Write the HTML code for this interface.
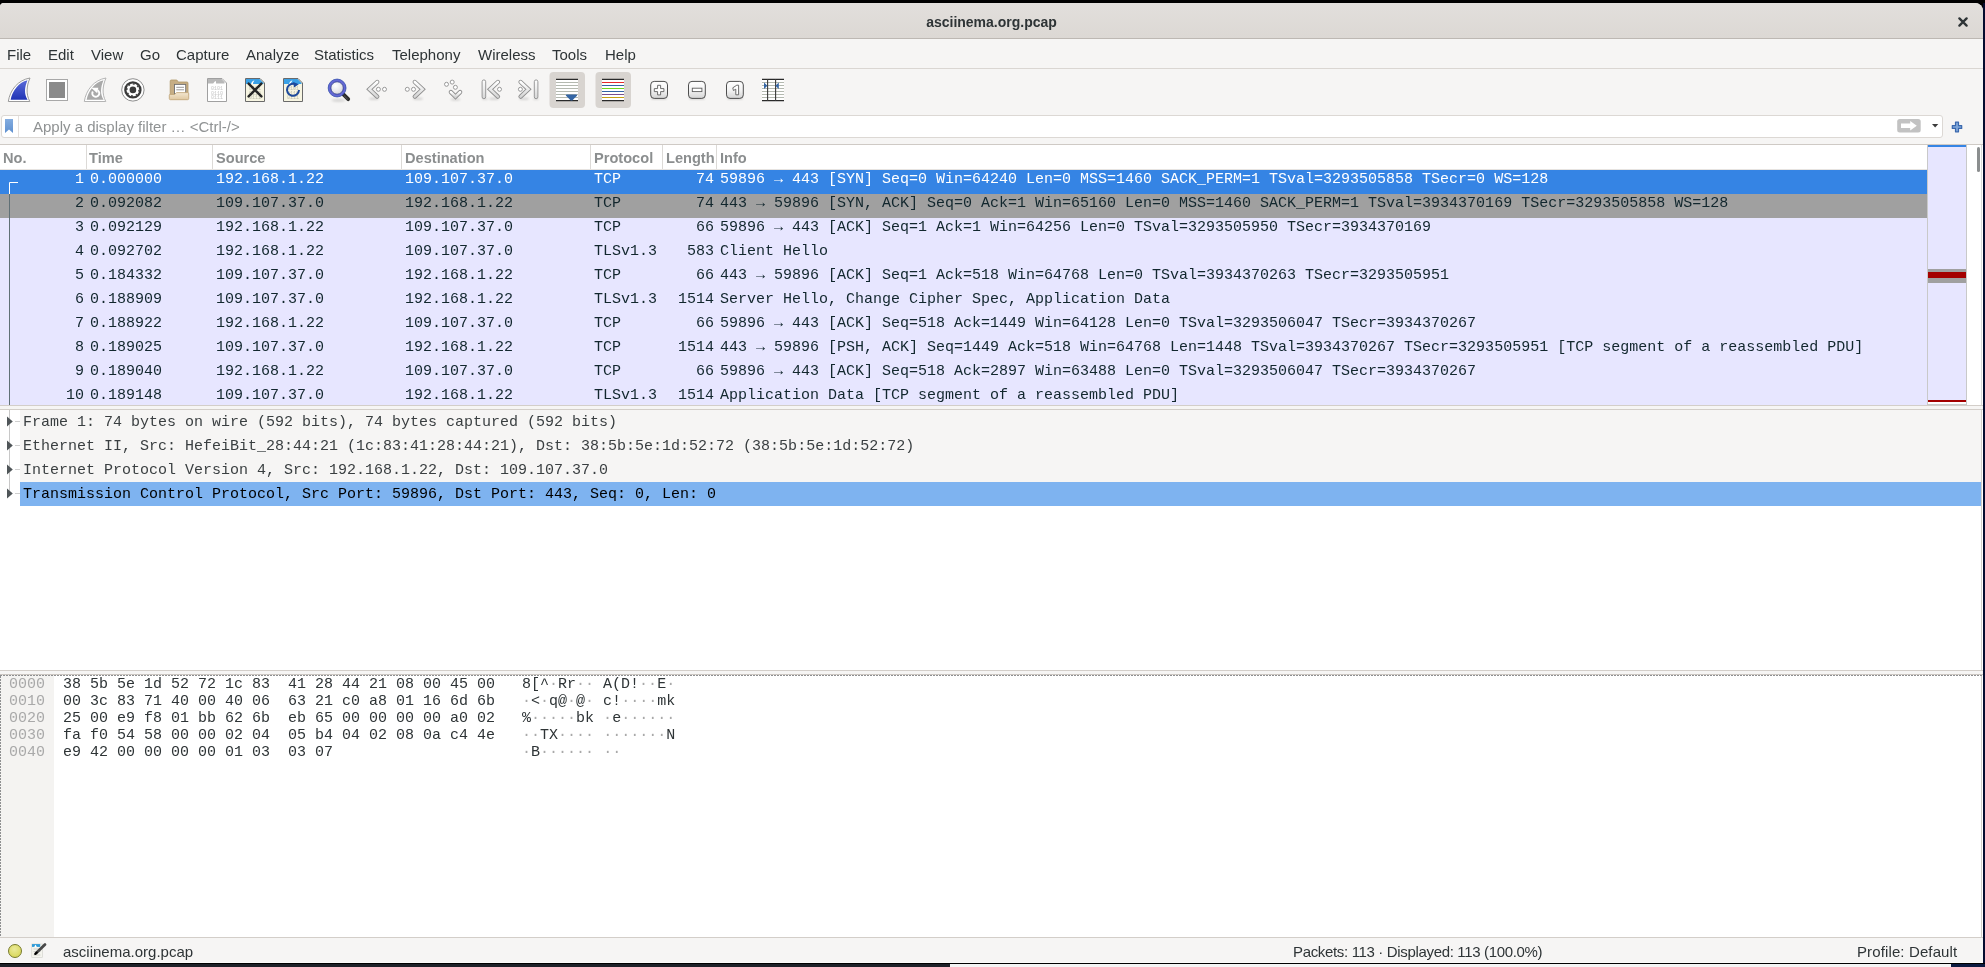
<!DOCTYPE html>
<html><head><meta charset="utf-8">
<style>
*{margin:0;padding:0;box-sizing:border-box}
body{will-change:transform;}
html,body{width:1985px;height:967px;overflow:hidden;background:#000;font-family:"Liberation Sans",sans-serif;color:#2e3436}
.a{position:absolute}
#win{position:absolute;left:0;top:3px;width:1983px;height:960px;background:#f6f5f4;border-radius:4px 8px 0 0;overflow:hidden}
#title{position:absolute;left:0;top:0;width:1983px;height:36px;background:linear-gradient(#e2dfdc,#dcd8d4);border-bottom:1px solid #bdb8b3;box-shadow:0 1px 0 #d4d0cc}
#title .t{position:absolute;left:0;width:1983px;top:11px;text-align:center;font-weight:bold;font-size:14px;color:#2e3436}
.menu{position:absolute;top:46px;font-size:15px;color:#2e3436}
.mono{font-family:"Liberation Mono",monospace;font-size:15px}
.row{position:absolute;left:0;width:1927px;height:24px;white-space:pre}
.row span{position:absolute;top:1px}
.hdr span{position:absolute;top:5px;font-family:"Liberation Sans",sans-serif;font-size:14.6px;font-weight:bold;color:#8b8e8f}
.hx i{font-style:normal;color:#a9a9a9}
.col{position:absolute;top:0;width:1px;height:24px;background:#dcdad7}
</style></head><body>
<div id="win">
 <div id="title"><div class="t">asciinema.org.pcap</div>
  <svg class="a" style="left:1955px;top:8px" width="16" height="16" viewBox="0 0 16 16"><path d="M4.4 7.4L11.6 14.6M11.6 7.4L4.4 14.6" stroke="#2e3436" stroke-width="2.3" stroke-linecap="round"/></svg>
 </div>
</div>
<!-- menubar -->
<div class="a" style="left:1983px;top:3px;width:2px;height:960px;background:#050b2e"></div>
<div class="a" style="left:0;top:39px;width:1983px;height:30px;background:#f6f5f4;border-bottom:1px solid #dad6d2"></div>
<div class="menu" style="left:7px">File</div>
<div class="menu" style="left:48px">Edit</div>
<div class="menu" style="left:91px">View</div>
<div class="menu" style="left:140px">Go</div>
<div class="menu" style="left:176px">Capture</div>
<div class="menu" style="left:246px">Analyze</div>
<div class="menu" style="left:314px">Statistics</div>
<div class="menu" style="left:392px">Telephony</div>
<div class="menu" style="left:478px">Wireless</div>
<div class="menu" style="left:552px">Tools</div>
<div class="menu" style="left:605px">Help</div>

<!-- TOOLBAR -->
<svg class="a" style="left:0;top:69px" width="800" height="45" viewBox="0 69 800 45">
 <defs>
  <linearGradient id="gb" x1="0" y1="0" x2="0" y2="1"><stop offset="0" stop-color="#5a6ad8"/><stop offset="1" stop-color="#1f33b5"/></linearGradient>
  <linearGradient id="gbtn" x1="0" y1="0" x2="0" y2="1"><stop offset="0" stop-color="#ffffff"/><stop offset="0.5" stop-color="#f4f4f4"/><stop offset="1" stop-color="#d4d4d4"/></linearGradient>
  <linearGradient id="gchev" x1="0" y1="0" x2="0" y2="1"><stop offset="0" stop-color="#ffffff"/><stop offset="1" stop-color="#d6d6d6"/></linearGradient>
  <radialGradient id="glass" cx="0.4" cy="0.35" r="0.7"><stop offset="0" stop-color="#ffffff"/><stop offset="0.6" stop-color="#e4e4e8"/><stop offset="1" stop-color="#c4c4cc"/></radialGradient>
  <linearGradient id="ring" x1="0" y1="0" x2="0" y2="1"><stop offset="0" stop-color="#6c80d8"/><stop offset="1" stop-color="#2d3f9e"/></linearGradient>
  <linearGradient id="gfold" x1="0" y1="0" x2="0" y2="1"><stop offset="0" stop-color="#f2e6d0"/><stop offset="1" stop-color="#e0c8a0"/></linearGradient>
  <filter id="bl" x="-50%" y="-50%" width="200%" height="200%"><feGaussianBlur stdDeviation="0.9"/></filter>
 </defs>
 <!-- shark fin start -->
 <path d="M8.3 101.5 C10 90 18 80 30 78 C26.5 86 25.8 94 29.8 101.5 Z" fill="#fff" stroke="#9a9a9a" stroke-width="1"/>
 <path d="M10.6 99.8 C12.5 90.5 19 82 27.5 80.3 C24.5 87.5 24 94 27.6 99.8 Z" fill="url(#gb)"/>
 <!-- stop -->
 <rect x="46.5" y="79.5" width="21" height="21" fill="#fff" stroke="#a8a8a8"/>
 <rect x="49" y="82" width="16" height="16" fill="#8a8a8a"/>
 <!-- restart fin -->
 <path d="M84.3 101.5 C86 90 94 80 106 78 C102.5 86 101.8 94 105.8 101.5 Z" fill="#fff" stroke="#b4b4b4" stroke-width="1"/>
 <path d="M86.6 99.8 C88.5 90.5 95 82 103.5 80.3 C100.5 87.5 100 94 103.6 99.8 Z" fill="#a9a9a9"/>
 <path d="M92.8 91.5 A3.5 3.5 0 1 0 97.6 90.3" fill="none" stroke="#fff" stroke-width="1.9"/>
 <path d="M91.2 87.8 L98.3 87.8 L97.2 93.2 Z" fill="#fff"/>
 <!-- gear -->
 <circle cx="132.9" cy="89.9" r="11.2" fill="#fff" stroke="#8f8f8f" stroke-width="1"/>
 <circle cx="132.9" cy="89.9" r="8.7" fill="#3a3a3a"/>
 <circle cx="132.9" cy="89.9" r="6.4" fill="#fff"/>
 <g fill="#3a3a3a">
  <rect x="131.95" y="83.2" width="1.9" height="1.3" transform="rotate(98 132.9 89.9)"/>
  <rect x="131.95" y="83.2" width="1.9" height="1.3" transform="rotate(143 132.9 89.9)"/>
  <rect x="131.95" y="83.2" width="1.9" height="1.3" transform="rotate(188 132.9 89.9)"/>
  <rect x="131.95" y="83.2" width="1.9" height="1.3" transform="rotate(233 132.9 89.9)"/>
  <rect x="131.95" y="83.2" width="1.9" height="1.3" transform="rotate(278 132.9 89.9)"/>
  <rect x="131.95" y="83.2" width="1.9" height="1.3" transform="rotate(323 132.9 89.9)"/>
  <rect x="131.95" y="83.2" width="1.9" height="1.3" transform="rotate(8 132.9 89.9)"/>
  <rect x="131.95" y="83.2" width="1.9" height="1.3" transform="rotate(53 132.9 89.9)"/>
 </g>
 <circle cx="132.9" cy="89.9" r="3.3" fill="#3a3a3a"/>
 <!-- open folder -->
 <path d="M170.2 81 Q170.2 80 171.3 80 L176.8 80 L178.3 82 L187 82 Q188 82 188 83.2 L188 95 L170.2 95 Z" fill="#c6ad84" stroke="#b09868" stroke-width="0.8"/>
 <rect x="174.5" y="84.4" width="11.2" height="9.5" fill="#fff" stroke="#707070" stroke-width="0.9"/>
 <path d="M176.3 87.3h7.7M176.3 89.8h7.7" stroke="#9a9a9a" stroke-width="1"/>
 <path d="M169.3 95.2 Q169.3 94.4 170.2 94.4 L174.6 94.4 L176.6 92.6 L187.7 92.6 Q188.7 92.6 188.7 93.6 L188.7 98.6 Q188.7 99.7 187.6 99.7 L170.4 99.7 Q169.3 99.7 169.3 98.6 Z" fill="url(#gfold)" stroke="#bfa273" stroke-width="0.8"/>
 <!-- save (disabled) -->
 <path d="M207.5 78.5 L222 78.5 L226.5 83 L226.5 101.5 L207.5 101.5 Z" fill="#fff" stroke="#a0a0a0"/>
 <path d="M208 79 L221.5 79 L224.5 82 L224.5 83.6 L216 83.6 L216 81 Q214.5 81 213.2 83.6 L208 83.6 Z" fill="#b8b8b8"/>
 <g font-family="Liberation Mono" font-size="5" fill="#c6c6c6"><text x="211" y="90">0101</text><text x="211" y="94.6">0110</text><text x="211" y="99.2">0111</text></g>
 <!-- close -->
 <path d="M245.5 78.5 L260 78.5 L264.5 83 L264.5 101.5 L245.5 101.5 Z" fill="#f7f5e2" stroke="#6a6a6a"/>
 <path d="M246 79 L259.5 79 L263.5 83 L263.5 84 L246 84 Z" fill="#3aa0e6"/>
 <path d="M251 84 Q252 80.5 254.5 80.5 Q252.8 82 253 84Z" fill="#fff"/>
 <g font-family="Liberation Mono" font-size="5" fill="#bdbdac"><text x="249" y="90">0101</text><text x="249" y="94.6">0110</text><text x="249" y="99.2">0111</text></g>
 <path d="M248.6 83.6 L261.4 96.4 M261.4 83.6 L248.6 96.4" stroke="#262626" stroke-width="2.4" stroke-linecap="round"/>
 <!-- reload -->
 <path d="M283.5 78.5 L298 78.5 L302.5 83 L302.5 101.5 L283.5 101.5 Z" fill="#f7f5e2" stroke="#6a6a6a"/>
 <path d="M284 79 L297.5 79 L301.5 83 L301.5 84 L284 84 Z" fill="#3aa0e6"/>
 <path d="M289 84 Q290 80.5 292.5 80.5 Q290.8 82 291 84Z" fill="#fff"/>
 <g font-family="Liberation Mono" font-size="5" fill="#bdbdac"><text x="287" y="90">0101</text><text x="287" y="94.6">0110</text><text x="287" y="99.2">0111</text></g>
 <path d="M296.3 84.8 A6 6 0 1 0 299 90" fill="none" stroke="#1d4a9c" stroke-width="2"/>
 <path d="M293.2 82 L298.8 84.2 L294 87.6 Z" fill="#1d4a9c"/>
 <!-- find -->
 <ellipse cx="338.5" cy="100.3" rx="7" ry="1.6" fill="#000" opacity="0.12" filter="url(#bl)"/>
 <path d="M343.4 94.4 L348.2 99.2" stroke="#2b2b2b" stroke-width="3.8" stroke-linecap="round"/>
 <path d="M344.2 95.8 L347.6 99.2" stroke="#6a6a6a" stroke-width="0.8"/>
 <circle cx="337.1" cy="88" r="7.6" fill="url(#glass)" stroke="#6468d4" stroke-width="2.8"/>
 <circle cx="337.1" cy="88" r="8.95" fill="none" stroke="#2846a8" stroke-width="0.7"/>
 <circle cx="337.1" cy="88" r="6.2" fill="none" stroke="#1f2f80" stroke-width="0.7"/>
 <!-- chevron shadows -->
 <g fill="#000" opacity="0.13" filter="url(#bl)">
  <ellipse cx="374" cy="98.8" rx="5" ry="1.2"/><ellipse cx="418" cy="98.8" rx="5" ry="1.2"/><ellipse cx="455.5" cy="99.5" rx="5" ry="1.2"/>
  <ellipse cx="485" cy="99" rx="3" ry="1"/><ellipse cx="494" cy="98.8" rx="5" ry="1.2"/><ellipse cx="524" cy="98.8" rx="5" ry="1.2"/><ellipse cx="536" cy="99" rx="3" ry="1"/>
 </g>
 <g fill="none" stroke-linecap="round" stroke-linejoin="miter">
  <g stroke="#8e8e8e" stroke-width="4.4">
   <path d="M377.2 82 L369.4 89.3 L377.2 96.6"/><path d="M414.8 82 L422.6 89.3 L414.8 96.6"/>
   <path d="M450.9 92.1 L455.5 96.6 L460.1 92.1"/>
   <path d="M497.9 82 L490.1 89.3 L497.9 96.6"/>
   <path d="M520.6 82 L528.4 89.3 L520.6 96.6"/>
  </g>
  <g stroke="url(#gchev)" stroke-width="2.6">
   <path d="M377.2 82 L369.4 89.3 L377.2 96.6"/><path d="M414.8 82 L422.6 89.3 L414.8 96.6"/>
   <path d="M450.9 92.1 L455.5 96.6 L460.1 92.1"/>
   <path d="M497.9 82 L490.1 89.3 L497.9 96.6"/>
   <path d="M520.6 82 L528.4 89.3 L520.6 96.6"/>
  </g>
 </g>
 <g fill="url(#gchev)" stroke="#8e8e8e" stroke-width="0.9"><rect x="482.1" y="79.9" width="3.6" height="18.8" rx="1.8"/><rect x="534.3" y="79.9" width="3.6" height="18.8" rx="1.8"/></g>
 <g fill="#fff" stroke="#8e8e8e" stroke-width="0.9">
  <circle cx="378.4" cy="89.3" r="2"/><circle cx="384.5" cy="89.3" r="2"/>
  <circle cx="407.3" cy="89.3" r="2"/><circle cx="413.5" cy="89.3" r="2"/>
  <circle cx="446.5" cy="84.3" r="2"/><circle cx="452.2" cy="82.1" r="2"/><circle cx="455.4" cy="87.3" r="2"/>
  <circle cx="499.5" cy="89.3" r="2"/><circle cx="520.4" cy="89.3" r="2"/>
 </g>
 <!-- autoscroll checked -->
 <rect x="549.5" y="72" width="35.5" height="36" rx="4" fill="#d8d4d0"/>
 <rect x="556" y="79" width="22" height="22" fill="#fff"/>
 <g stroke="#b4b9b0" stroke-width="1"><path d="M556 82.5h22M556 85.5h22M556 88.5h22M556 91.5h22M556 94.5h22M556 97.5h22"/></g>
 <path d="M556 79.4h22M556 100.6h22" stroke="#2a2a2a" stroke-width="1.2"/>
 <path d="M565.8 95.6 Q565.8 94.6 567 94.6 L576 94.6 Q577.2 94.6 577.2 95.6 Q574.5 98.2 572.3 100.6 L570.7 100.6 Q568.5 98.2 565.8 95.6Z" fill="#3465a4"/>
 <!-- colorize checked -->
 <rect x="595.5" y="72" width="35.5" height="36" rx="4" fill="#d8d4d0"/>
 <rect x="602" y="79" width="22" height="22" fill="#fff"/>
 <path d="M602 79.4h22M602 100.6h22" stroke="#2a2a2a" stroke-width="1.2"/>
 <path d="M602 82.5h22" stroke="#e8282a"/><path d="M602 85.5h22" stroke="#3465a4"/><path d="M602 88.5h22" stroke="#6ed61e"/><path d="M602 91.5h22" stroke="#3465a4"/><path d="M602 94.5h22" stroke="#7a4f8e"/><path d="M602 97.5h22" stroke="#c8a010"/>
 <!-- zoom buttons -->
 <g fill="#000" opacity="0.15" filter="url(#bl)"><rect x="651" y="96.5" width="16" height="3" rx="1.5"/><rect x="689" y="96.5" width="16" height="3" rx="1.5"/><rect x="727" y="96.5" width="16" height="3" rx="1.5"/></g>
 <g fill="url(#gbtn)" stroke="#4e4e4e" stroke-width="1"><rect x="650.7" y="81.4" width="16.8" height="17" rx="3.5"/><rect x="688.5" y="81.4" width="16.8" height="17" rx="3.5"/><rect x="726.5" y="81.4" width="16.8" height="17" rx="3.5"/></g>
 <path d="M657.6 85.3h3v3.3h3.3v3h-3.3v3.3h-3v-3.3h-3.3v-3h3.3z" fill="#fff" stroke="#5e5e5e" stroke-width="0.9"/>
 <rect x="692.3" y="88.2" width="9.6" height="3.4" fill="#fff" stroke="#5e5e5e" stroke-width="0.9"/>
 <path d="M732.8 87.8 L736.8 85.2 L738.6 85.2 L738.6 94.8 L735.8 94.8 L735.8 89.2 L733.4 90.5 Z" fill="#fff" stroke="#5e5e5e" stroke-width="0.9"/>
 <!-- resize columns -->
 <rect x="762" y="79" width="22" height="22" fill="#fff"/>
 <g stroke="#b4b9b0" stroke-width="1"><path d="M762 82.5h22M762 85.5h22M762 88.5h22M762 91.5h22M762 94.5h22M762 97.5h22"/></g>
 <path d="M762 79.4h22M762 100.6h22" stroke="#2a2a2a" stroke-width="1.2"/>
 <path d="M767.6 79v22M775.6 79v22" stroke="#3a3a3a" stroke-width="1.1"/>
 <path d="M764 82.6 L767.4 85.7 L764 89 Z M778.8 82.6 L775.4 85.7 L778.8 89 Z" fill="#3465a4"/>
</svg>


<!-- FILTER -->
<div class="a" style="left:1px;top:115px;width:1942px;height:23px;background:#fff;border:1px solid #dcd8d4;border-radius:3px"></div>
<div class="a" style="left:18px;top:116px;width:1px;height:21px;background:#e4e0dd"></div>
<div class="a" style="left:33px;top:118px;font-size:15px;color:#8f9293">Apply a display filter … &lt;Ctrl-/&gt;</div>
<svg class="a" style="left:0;top:114px" width="20" height="25" viewBox="0 0 20 25"><defs><linearGradient id="bm" x1="0" y1="0" x2="0" y2="1"><stop offset="0" stop-color="#84ade0"/><stop offset="1" stop-color="#5f90cf"/></linearGradient></defs><path d="M5 5h8v14l-4-3.6-4 3.6z" fill="url(#bm)"/></svg>
<svg class="a" style="left:1890px;top:114px" width="80" height="25" viewBox="1890 114 80 25">
 <rect x="1897.2" y="119.1" width="23.5" height="13.5" rx="2.5" fill="#c2c2c2"/>
 <path d="M1901 123.6h9.2v-2.6l6.6 4.8-6.6 4.8v-2.6h-9.2z" fill="#fff"/>
 <path d="M1932 124l6.3 0-3.15 3.4z" fill="#3b3b3b"/>
 <path d="M1955.5 122.2h3v3.4h3.2v2.8h-3.2v3.4h-3v-3.4h-3.2v-2.8h3.2z" fill="#7ea5d8" stroke="#3a68ad" stroke-width="1.2" stroke-linejoin="round"/>
</svg>

<!-- PACKET LIST -->
<div class="a" style="left:0;top:144px;width:1983px;height:262px;background:#fff;border-top:1px solid #cfcac5"></div>
<div class="a mono" style="left:0;top:145px;width:1927px;height:261px;overflow:hidden">
 <div class="hdr a" style="left:0;top:0;width:1927px;height:25px;background:#fff;border-bottom:1px solid #e6e3e0">
  <span style="left:3px">No.</span><span style="left:89px">Time</span><span style="left:216px">Source</span><span style="left:405px">Destination</span><span style="left:594px">Protocol</span><span style="left:666px">Length</span><span style="left:720px">Info</span>
  <div class="col" style="left:86px"></div><div class="col" style="left:212px"></div><div class="col" style="left:401px"></div><div class="col" style="left:590px"></div><div class="col" style="left:662px"></div><div class="col" style="left:716px"></div>
 </div>
 <div class="row" style="top:25px;background:#3584e4;color:#ffffff"><span style="right:1843px">1</span><span style="left:90px">0.000000</span><span style="left:216px">192.168.1.22</span><span style="left:405px">109.107.37.0</span><span style="left:594px">TCP</span><span style="right:1213px">74</span><span style="left:720px">59896 → 443 [SYN] Seq=0 Win=64240 Len=0 MSS=1460 SACK_PERM=1 TSval=3293505858 TSecr=0 WS=128</span></div>
<div class="row" style="top:49px;background:#a0a0a0;color:#12272e"><span style="right:1843px">2</span><span style="left:90px">0.092082</span><span style="left:216px">109.107.37.0</span><span style="left:405px">192.168.1.22</span><span style="left:594px">TCP</span><span style="right:1213px">74</span><span style="left:720px">443 → 59896 [SYN, ACK] Seq=0 Ack=1 Win=65160 Len=0 MSS=1460 SACK_PERM=1 TSval=3934370169 TSecr=3293505858 WS=128</span></div>
<div class="row" style="top:73px;background:#e7e6ff;color:#12272e"><span style="right:1843px">3</span><span style="left:90px">0.092129</span><span style="left:216px">192.168.1.22</span><span style="left:405px">109.107.37.0</span><span style="left:594px">TCP</span><span style="right:1213px">66</span><span style="left:720px">59896 → 443 [ACK] Seq=1 Ack=1 Win=64256 Len=0 TSval=3293505950 TSecr=3934370169</span></div>
<div class="row" style="top:97px;background:#e7e6ff;color:#12272e"><span style="right:1843px">4</span><span style="left:90px">0.092702</span><span style="left:216px">192.168.1.22</span><span style="left:405px">109.107.37.0</span><span style="left:594px">TLSv1.3</span><span style="right:1213px">583</span><span style="left:720px">Client Hello</span></div>
<div class="row" style="top:121px;background:#e7e6ff;color:#12272e"><span style="right:1843px">5</span><span style="left:90px">0.184332</span><span style="left:216px">109.107.37.0</span><span style="left:405px">192.168.1.22</span><span style="left:594px">TCP</span><span style="right:1213px">66</span><span style="left:720px">443 → 59896 [ACK] Seq=1 Ack=518 Win=64768 Len=0 TSval=3934370263 TSecr=3293505951</span></div>
<div class="row" style="top:145px;background:#e7e6ff;color:#12272e"><span style="right:1843px">6</span><span style="left:90px">0.188909</span><span style="left:216px">109.107.37.0</span><span style="left:405px">192.168.1.22</span><span style="left:594px">TLSv1.3</span><span style="right:1213px">1514</span><span style="left:720px">Server Hello, Change Cipher Spec, Application Data</span></div>
<div class="row" style="top:169px;background:#e7e6ff;color:#12272e"><span style="right:1843px">7</span><span style="left:90px">0.188922</span><span style="left:216px">192.168.1.22</span><span style="left:405px">109.107.37.0</span><span style="left:594px">TCP</span><span style="right:1213px">66</span><span style="left:720px">59896 → 443 [ACK] Seq=518 Ack=1449 Win=64128 Len=0 TSval=3293506047 TSecr=3934370267</span></div>
<div class="row" style="top:193px;background:#e7e6ff;color:#12272e"><span style="right:1843px">8</span><span style="left:90px">0.189025</span><span style="left:216px">109.107.37.0</span><span style="left:405px">192.168.1.22</span><span style="left:594px">TCP</span><span style="right:1213px">1514</span><span style="left:720px">443 → 59896 [PSH, ACK] Seq=1449 Ack=518 Win=64768 Len=1448 TSval=3934370267 TSecr=3293505951 [TCP segment of a reassembled PDU]</span></div>
<div class="row" style="top:217px;background:#e7e6ff;color:#12272e"><span style="right:1843px">9</span><span style="left:90px">0.189040</span><span style="left:216px">192.168.1.22</span><span style="left:405px">109.107.37.0</span><span style="left:594px">TCP</span><span style="right:1213px">66</span><span style="left:720px">59896 → 443 [ACK] Seq=518 Ack=2897 Win=63488 Len=0 TSval=3293506047 TSecr=3934370267</span></div>
<div class="row" style="top:241px;background:#e7e6ff;color:#12272e"><span style="right:1843px">10</span><span style="left:90px">0.189148</span><span style="left:216px">109.107.37.0</span><span style="left:405px">192.168.1.22</span><span style="left:594px">TLSv1.3</span><span style="right:1213px">1514</span><span style="left:720px">Application Data [TCP segment of a reassembled PDU]</span></div>
<svg class="a" style="left:0;top:25px" width="20" height="240" viewBox="0 0 20 240"><path d="M9.5 36V12.5H18" fill="none" stroke="#fff" stroke-width="1"/><path d="M9.5 24V240" stroke="#607076" stroke-width="1"/></svg>
</div>

<div class="a" style="left:1927px;top:145px;width:1px;height:260px;background:#c9c9c9"></div>
<div class="a" style="left:1928px;top:145px;width:39px;height:260px;background:#e7e6ff;border-right:1px solid #c9c9c9"></div>
<div class="a" style="left:1928px;top:145px;width:38px;height:2px;background:#3584e4"></div>
<div class="a" style="left:1928px;top:269px;width:38px;height:14px;background:#a0a0a0"></div>
<div class="a" style="left:1928px;top:272px;width:38px;height:6px;background:#a40000"></div>
<div class="a" style="left:1928px;top:400px;width:38px;height:2px;background:#a40000"></div>
<div class="a" style="left:1928px;top:402px;width:38px;height:2px;background:#fff"></div><div class="a" style="left:1928px;top:404px;width:39px;height:1px;background:#c9c9c9"></div>
<div class="a" style="left:1967px;top:145px;width:15px;height:260px;background:#fff;border-right:1px solid #d9d9d9"></div>
<div class="a" style="left:1977px;top:147px;width:3px;height:25px;border-radius:2px;background:#8b8e8f"></div>
<!-- DETAILS -->
<div class="a" style="left:0;top:405px;width:1983px;height:1px;background:#d3cec9"></div>
<div class="a" style="left:0;top:409px;width:1983px;height:1px;background:#d3cec9"></div>
<div class="a" style="left:0;top:410px;width:1983px;height:260px;background:#fff"></div>
<div class="a" style="left:1981px;top:409px;width:1px;height:262px;background:#d3cec9"></div>
<div class="a" style="left:20px;top:410px;width:1961px;height:72px;background:#f6f5f4"></div>
<div class="a" style="left:20px;top:482px;width:1961px;height:24px;background:#7eb3f0"></div>
<div class="a" style="left:9px;top:410px;width:1px;height:84px;background:#c8c8c8"></div>
<svg class="a" style="left:0;top:410px" width="22" height="96" viewBox="0 0 22 96">
 <g fill="#4f5558"><path d="M7 6.5 L12.8 11.5 L7 16.5Z"/><path d="M7 30.5 L12.8 35.5 L7 40.5Z"/><path d="M7 54.5 L12.8 59.5 L7 64.5Z"/><path d="M7 78.5 L12.8 83.5 L7 88.5Z"/></g>
 <g stroke="#cfcfcf" stroke-width="1"><path d="M15 11.5h5M15 35.5h5M15 59.5h5M15 83.5h5"/></g>
</svg>
<div class="a mono" style="left:23px;top:411px;color:#3a3f41;white-space:pre;line-height:24px">Frame 1: 74 bytes on wire (592 bits), 74 bytes captured (592 bits)
Ethernet II, Src: HefeiBit_28:44:21 (1c:83:41:28:44:21), Dst: 38:5b:5e:1d:52:72 (38:5b:5e:1d:52:72)
Internet Protocol Version 4, Src: 192.168.1.22, Dst: 109.107.37.0
<span style="color:#000">Transmission Control Protocol, Src Port: 59896, Dst Port: 443, Seq: 0, Len: 0</span></div>
<div class="a" style="left:0;top:670px;width:1983px;height:1px;background:#d3cec9"></div>
<div class="a" style="left:0;top:671px;width:1983px;height:3px;background:#f6f5f4"></div>
<div class="a" style="left:0;top:674px;width:1983px;height:1px;background:#cbc6c1"></div>


<!-- HEX -->
<div class="a" style="left:0;top:675px;width:1983px;height:262px;background:#fff"></div>
<div class="a" style="left:0;top:675px;width:54px;height:262px;background:#f4f3f1"></div>
<div class="a" style="left:1981px;top:675px;width:1px;height:262px;background:#d3cec9"></div>
<div class="a" style="left:0;top:675px;width:1983px;height:1px;background:repeating-linear-gradient(to right,#8f9091 0 2px,transparent 2px 3px)"></div>
<div class="a" style="left:0;top:676px;width:1px;height:261px;background:repeating-linear-gradient(to bottom,#8f9091 0 2px,transparent 2px 3px)"></div>
<div class="a mono" style="left:9px;top:676px;line-height:17px;color:#a9a9a9;white-space:pre">0000
0010
0020
0030
0040</div>
<div class="a mono" style="left:63px;top:676px;line-height:17px;color:#2e3436;white-space:pre">38 5b 5e 1d 52 72 1c 83  41 28 44 21 08 00 45 00
00 3c 83 71 40 00 40 06  63 21 c0 a8 01 16 6d 6b
25 00 e9 f8 01 bb 62 6b  eb 65 00 00 00 00 a0 02
fa f0 54 58 00 00 02 04  05 b4 04 02 08 0a c4 4e
e9 42 00 00 00 00 01 03  03 07</div>
<div class="a mono hx" style="left:522px;top:676px;line-height:17px;color:#2e3436;white-space:pre">8[^<i>·</i>Rr<i>·</i><i>·</i> A(D!<i>·</i><i>·</i>E<i>·</i>
<i>·</i>&lt;<i>·</i>q@<i>·</i>@<i>·</i> c!<i>·</i><i>·</i><i>·</i><i>·</i>mk
%<i>·</i><i>·</i><i>·</i><i>·</i><i>·</i>bk <i>·</i>e<i>·</i><i>·</i><i>·</i><i>·</i><i>·</i><i>·</i>
<i>·</i><i>·</i>TX<i>·</i><i>·</i><i>·</i><i>·</i> <i>·</i><i>·</i><i>·</i><i>·</i><i>·</i><i>·</i><i>·</i>N
<i>·</i>B<i>·</i><i>·</i><i>·</i><i>·</i><i>·</i><i>·</i> <i>·</i><i>·</i></div>

<!-- STATUS -->
<div class="a" style="left:0;top:937px;width:1983px;height:25px;background:#f6f5f4;border-top:1px solid #d3cec9"></div>
<div class="a" style="left:8px;top:944px;width:14px;height:14px;border-radius:50%;background:radial-gradient(circle at 45% 35%,#eaea9a,#d4d24a);border:1px solid #777a2a"></div>
<div class="a" style="left:63px;top:943px;font-size:15px;color:#2e3436">asciinema.org.pcap</div>
<div class="a" style="left:1293px;top:943px;font-size:15px;letter-spacing:-0.34px;color:#2e3436">Packets: 113 · Displayed: 113 (100.0%)</div>
<div class="a" style="left:1857px;top:943px;font-size:15px;letter-spacing:0.12px;color:#2e3436">Profile: Default</div>
<div class="a" style="left:0;top:962px;width:1983px;height:1px;background:#fbfbfa"></div>
<div class="a" style="left:0;top:963px;width:1985px;height:1px;background:#000"></div>
<div class="a" style="left:0;top:964px;width:950px;height:3px;background:#1e2128"></div>
<div class="a" style="left:950px;top:964px;width:1001px;height:3px;background:#f4f4f4"></div>
<div class="a" style="left:1951px;top:964px;width:34px;height:3px;background:#0c1a40"></div>
<svg class="a" style="left:28px;top:940px" width="20" height="20" viewBox="28 940 20 20">
 <rect x="31.8" y="944" width="10.6" height="13.6" fill="#f4f4ee" stroke="#d0d0c8" stroke-width="0.6"/>
 <rect x="32" y="944.1" width="8.2" height="2.8" fill="#2c9ad8"/>
 <path d="M34.3 947 Q35 944.8 35.8 944.8 Q36.3 946 36.8 947Z" fill="#fff"/>
 <path d="M33.5 949h7M33.5 951.5h7M33.5 955h7" stroke="#c8c8c0" stroke-width="0.8"/>
 <path d="M45 944.6 L36 953.3" stroke="#484848" stroke-width="2.8" stroke-linecap="round"/>
 <path d="M36.8 952.5 L35.2 954" stroke="#000" stroke-width="2" stroke-linecap="round"/>
</svg>
</body></html>
